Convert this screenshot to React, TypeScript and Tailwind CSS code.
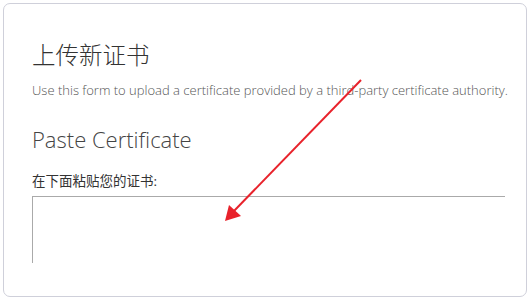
export default function App() {
  return (
    <div className="relative h-[300px] w-[530px] bg-white p-[3px]" style={{ fontFamily: '"Open Sans", "Noto Sans CJK SC", sans-serif' }}>
      <div className="h-[294px] w-[524px] overflow-hidden rounded-[7px] border border-[#cfd0da] bg-white pl-[28px]">
        <h1 className="mt-[36px] text-[23.5px] leading-[30px] font-light text-[#333]">上传新证书</h1>
        <p className="mt-[12px] text-[13px] leading-[16px] font-light text-[#555]">
          Use this form to upload a certificate provided by a third-party certificate authority.
        </p>
        <h2 className="mt-[26px] text-[22px] leading-[30px] font-light text-[#444]">Paste Certificate</h2>
        <label className="mt-[17px] block text-[13.5px] leading-[20px] text-[#333]">在下面粘贴您的证书:</label>
        <div className="mt-[5px] h-[67px] w-[473px] border-t border-l border-[#aaa]" />
      </div>
      <svg className="pointer-events-none absolute top-0 left-0" width="530" height="300" viewBox="0 0 530 300">
        <line x1="361" y1="80" x2="234" y2="211" stroke="#e8222b" strokeWidth="2" />
        <polygon points="225,221 229,205 241,216" fill="#e8222b" />
      </svg>
    </div>
  )
}
